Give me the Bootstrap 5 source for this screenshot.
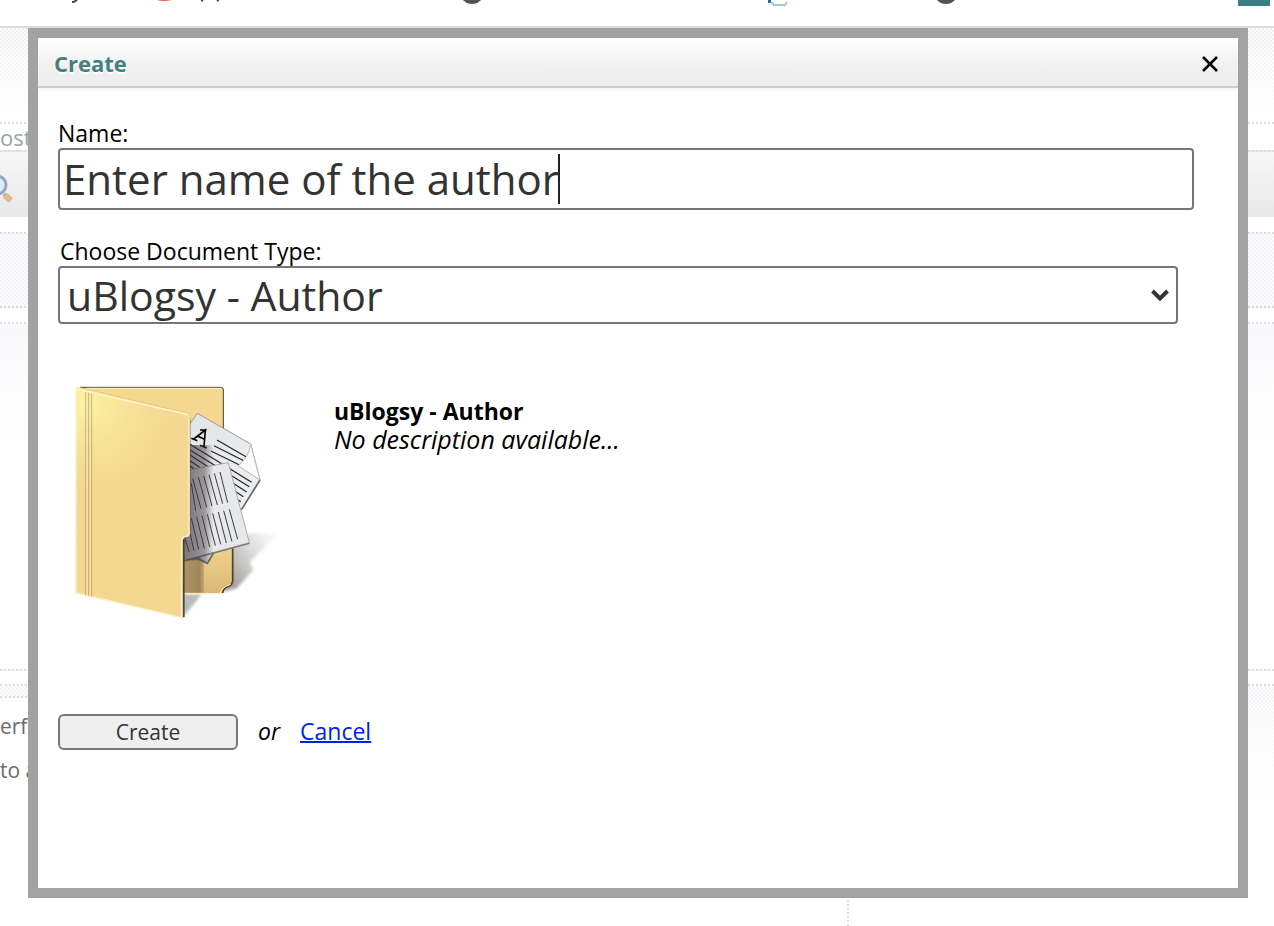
<!DOCTYPE html>
<html lang="en">
<head>
<meta charset="utf-8">
<meta name="viewport" content="width=device-width, initial-scale=1">
<title>Create</title>
<link rel="stylesheet" href="https://cdn.jsdelivr.net/npm/bootstrap@5.3.0/dist/css/bootstrap.min.css">
<style>
  body { font-family: "Open Sans", "Noto Sans", sans-serif; font-size: 23px; line-height: 28px; color: #000; background: #fff; }
  .mesh { background-image: linear-gradient(transparent, var(--veil-end, #fff)), repeating-conic-gradient(var(--ink, #f4f4f8) 0 25%, #fcfcfd 0 50%); background-size: 100% 100%, 4px 4px; }
  .rule-top { border-top: 2px dotted #dedede; }
  .rule-bottom { border-bottom: 2px dotted #dedede; }
  .topbar { height: 28px; border-bottom: 2px solid #dcdce0; }
  .hero { height: 84px; --ink: #efefef; }
  .crumbs { height: 28px; margin-top: 10px; font-size: 22px; line-height: 26px; color: #9aa3a8; }
  .tools { height: 67px; background: linear-gradient(#f7f7f7, #e8e8e8); }
  .band { height: 76px; margin-top: 15px; --veil-end: transparent; }
  .panel { height: 349px; margin-top: 14px; background: linear-gradient(#f8f8fb, #fff 120px); }
  .lower { padding-top: 13px; }
  .strip { height: 14px; --veil-end: transparent; }
  .fade-area { height: 120px; }
  .side-copy { padding-top: 6px; font-size: 21px; line-height: 44px; color: #6c6c6c; }
  .side-copy p { height: 44px; }
  .column-rule { border-right: 2px dotted #dedede; }

  .dialog { position: fixed; inset: 28px 26px 28px 28px; border: 10px solid #a2a2a2; background: #fff; overflow: auto; }
  .dialog-head { height: 50px; padding: 2px 16px 0; background: linear-gradient(#fff, #f0f0f0 60%, #eee); border-bottom: 2px solid #ccc; box-shadow: 0 2px 2px #f6f6f6; }
  .dialog-head h1 { font-size: 22px; line-height: 28px; font-weight: 700; color: #45807f; text-shadow: 0 2px 0 #fff; }
  .close-x { width: 24px; height: 24px; margin-top: 2px; }
  .dialog-body { padding: 31px 44px 20px 20px; }
  .dialog-body label { height: 29px; }
  .box-input, .box-select { border: 2px solid #767676; border-radius: 4px; color: #333; background-color: #fff; }
  .box-input { height: 62px; padding: 0 4px 2px 3px; font-size: 42px; line-height: 54px; }
  .box-select { height: 58px; padding: 0 40px 0 7px; font-size: 41px; line-height: 52px; width: calc(100% - 16px); appearance: none;
    background: #fff url("data:image/svg+xml,%3Csvg xmlns='http://www.w3.org/2000/svg' width='18' height='12' viewBox='0 0 18 12'%3E%3Cpath d='M1.5 2 9 9.5 16.5 2' fill='none' stroke='%23333' stroke-width='4'/%3E%3C/svg%3E") no-repeat right 7px center; }
  .caret { position: absolute; left: 500px; top: 6px; width: 2px; height: 50px; background: #222; }
  .type-label { margin-left: 2px; margin-top: 27px; }
  .preview { gap: 44px; margin-top: 46px; padding-left: 2px; }
  .preview-text { padding-top: 27px; }
  .preview-text em { font-size: 25px; }
  .actions { margin-top: 84px; gap: 20px; }
  .btn-make { width: 180px; height: 36px; padding: 0; border: 2px solid #767676; border-radius: 6px; background: #efefef; color: #333; font-size: 21px; line-height: 30px; }
  .link-cancel { color: #001df5; text-decoration-thickness: 2px; }
  .actions em, .link-cancel { padding-bottom: 2px; }
</style>
</head>
<body class="overflow-hidden">
<div class="vh-100 d-flex flex-column overflow-hidden" aria-hidden="true">
  <div class="topbar flex-shrink-0 d-flex">
    <svg width="440" height="10" class="flex-shrink-0"><path d="M72 2q4 0 5-3" stroke="#444" stroke-width="2" fill="none"/><ellipse cx="164" cy="-6" rx="14" ry="7" fill="#ee5b50"/><path d="M200-4q1 4 3 5M220-4q-1 4-3 5" stroke="#444" stroke-width="2" fill="none"/></svg>
    <svg width="360" height="10" class="flex-shrink-0"><circle cx="32" cy="-8" r="10" fill="none" stroke="#515156" stroke-width="4"/><path d="M328 0h3v3h-3z" fill="#2a6aa8"/><path d="M331 2l3 3h11l2-3" stroke="#a3c7dc" stroke-width="2" fill="none"/></svg>
    <svg width="200" height="10" class="flex-shrink-0"><circle cx="146" cy="-8" r="10" fill="none" stroke="#515156" stroke-width="4"/></svg>
    <svg width="32" height="6" class="ms-auto me-1 flex-shrink-0"><path d="M0 0h32v6H0z" fill="#3b8084"/></svg>
  </div>
  <div class="hero mesh flex-shrink-0"></div>
  <div class="crumbs rule-top flex-shrink-0">ost</div>
  <div class="tools rule-top flex-shrink-0">
    <svg width="28" height="60"><circle cx="-3" cy="33" r="9" fill="#d9ecfa" stroke="#9aa6b8" stroke-width="3"/><path d="M4 42l5 5" stroke="#a9adb5" stroke-width="4"/><path d="M7 41l6 5-4 5-6-5z" fill="#e3bd8c"/></svg>
  </div>
  <div class="band mesh rule-top rule-bottom flex-shrink-0"></div>
  <div class="panel rule-top rule-bottom flex-shrink-0"></div>
  <div class="lower row g-0 flex-grow-1">
    <div class="col-8 d-flex">
      <div class="flex-grow-1">
        <div class="strip mesh rule-top rule-bottom"></div>
        <div class="side-copy"><p class="m-0">erf</p><p class="m-0">to a</p></div>
      </div>
      <div class="column-rule"></div>
    </div>
    <div class="col-4"><div class="fade-area mesh rule-top"></div></div>
  </div>
</div>

<div class="dialog" role="dialog" aria-labelledby="dialog-title">
  <div class="dialog-head d-flex align-items-center justify-content-between">
    <h1 class="m-0" id="dialog-title">Create</h1>
    <button type="button" class="close-x btn p-0 border-0 d-flex align-items-center justify-content-center" aria-label="Close">
      <svg width="16" height="16" viewBox="0 0 16 16"><path d="M1 1l14 14M15 1L1 15" stroke="#000" stroke-width="2.6"/></svg>
    </button>
  </div>
  <form class="dialog-body">
    <label for="author-name" class="d-block">Name:</label>
    <div class="position-relative">
      <input id="author-name" type="text" class="box-input w-100 d-block" value="Enter name of the author">
      <span class="caret"></span>
    </div>
    <label for="doc-type" class="type-label d-block">Choose Document Type:</label>
    <select id="doc-type" class="box-select d-block"><option>uBlogsy - Author</option></select>

    <div class="preview d-flex align-items-start">
      <svg width="230" height="260" viewBox="0 0 690 780" class="flex-shrink-0" aria-hidden="true">
        <defs>
          <linearGradient id="back" x1="0" y1="0" x2="0" y2="1"><stop offset="0" stop-color="#f5d991"/><stop offset=".8" stop-color="#efd08a"/><stop offset="1" stop-color="#d9b878"/></linearGradient>
          <radialGradient id="front" gradientUnits="userSpaceOnUse" cx="80" cy="100" r="260"><stop offset="0" stop-color="#fbf3a2"/><stop offset=".5" stop-color="#f7e198"/><stop offset="1" stop-color="#f4d892"/></radialGradient>
          <linearGradient id="paper" x1="0" y1="0" x2="1" y2="1"><stop offset="0" stop-color="#e2e3e5"/><stop offset="1" stop-color="#f0f2f3"/></linearGradient>
          <linearGradient id="shade" gradientUnits="userSpaceOnUse" x1="385" y1="0" x2="460" y2="0"><stop offset="0" stop-color="#3b3438" stop-opacity=".6"/><stop offset=".65" stop-color="#3b3438" stop-opacity=".45"/><stop offset="1" stop-color="#3b3438" stop-opacity="0"/></linearGradient>
          <linearGradient id="cast" gradientUnits="userSpaceOnUse" x1="490" y1="600" x2="640" y2="500"><stop offset="0" stop-color="#8d8884" stop-opacity=".8"/><stop offset="1" stop-color="#bbb" stop-opacity=".1"/></linearGradient>
          <linearGradient id="inner" gradientUnits="userSpaceOnUse" x1="370" y1="0" x2="440" y2="0"><stop offset="0" stop-color="#b19564"/><stop offset=".7" stop-color="#a0865a"/><stop offset="1" stop-color="#a0865a" stop-opacity="0"/></linearGradient>
          <filter id="soft"><feGaussianBlur stdDeviation="5"/></filter>
          <clipPath id="sheets"><path d="M388 160L412 130 572 222 600 330 545 418 568 518 458 552 442 580 420 570 370 572V500H388z"/></clipPath>
        </defs>
        <path d="M515 510L570 490 655 492 570 575 580 600 530 655 490 665z" fill="url(#cast)" filter="url(#soft)"/>
        <path d="M368 672H425Q400 705 370 740z" fill="#777" opacity=".5" filter="url(#soft)"/>
        <path d="M48 52H484Q491 52 491 60V500L518 540V635Q518 646 506 649 492 652 487 670H370L48 600z" fill="url(#back)"/>
        <path d="M60 52H484Q490 53 490 60V190" fill="none" stroke="#4b4232" stroke-width="3"/>
        <path d="M518 535V632Q517 646 505 649 490 652 488 669" fill="none" stroke="#4b4232" stroke-width="5"/>
        <path d="M80 55H482M375 671H480Q486 651 512 643" fill="none" stroke="#fff0c2" stroke-width="3"/>
        <path d="M370 560L432 560V668H370z" fill="url(#inner)"/>
        <path d="M412 130L572 222 600 330 490 505 442 580 370 530V190z" fill="url(#paper)" stroke="#9c9c9c" stroke-width="3"/>
        <path d="M600 330L545 418M460 550L442 580 415 568" stroke="#666" stroke-width="5" fill="none"/>
        <path d="M471 210L558 260M462 227L553 273M453 243L540 286M390 223L575 337M390 240L568 350M390 255L560 366M390 272L550 380M390 288L542 395" stroke="#222" stroke-width="3.4"/>
        <path d="M572 222L600 330 534 287Q566 264 572 222z" fill="#fbfbfb" stroke="#b6b8ba" stroke-width="3"/>
        <path d="M394 205L412 212M420 226L440 234M401 207L436 180 432 230M413 199L434 208M420 180L440 180" fill="none" stroke="#000" stroke-width="5"/>
        <path d="M384 300L505 278 568 518 370 572V500H386z" fill="#e6e8ea" stroke="#aaa" stroke-width="3"/>
        <path d="M568 520L372 573" stroke="#777" stroke-width="4"/>
        <path d="M394 340L407 422M398 326L423 416M415 321L440 412M431 318L456 408M447 314L472 405M463 310L488 401M480 306L503 398M394 444L416 538M410 440L433 535M426 437L449 531M442 433L466 527M458 430L482 523M475 426L499 519M491 422L516 515M508 418L533 508M374 502L387 545M390 490L402 542" stroke="#3c3c3c" stroke-width="3"/>
        <path d="M370 225H470V575H370z" fill="url(#shade)" clip-path="url(#sheets)"/>
        <path d="M371 508V742M388 145V488" stroke="#4b4334" stroke-width="6"/>
        <path d="M48 54Q50 51 60 53L378 128Q389 131 389 145V490Q389 500 378 500 367 502 367 512V745L46 670z" fill="url(#front)"/>
        <path d="M364 743L48 669V57L378 132Q387 135 387 147V490Q387 498 378 499 366 501 365 512V742" fill="none" stroke="#fff3cb" stroke-width="4"/>
        <path d="M60 53L378 128Q388 131 389 145" fill="none" stroke="#d6c66d" stroke-width="2"/>
        <path d="M77 66V676M86 68V678M95 70V680" stroke="#b2965b" stroke-opacity=".8" stroke-width="2.5"/>
        <path d="M81 67V676M91 69V678" stroke="#fbe6ad" stroke-width="3"/>
      </svg>
      <div class="preview-text"><strong class="d-block">uBlogsy - Author</strong><em class="d-block">No description available...</em></div>
    </div>

    <div class="actions d-flex align-items-center">
      <button type="button" class="btn-make">Create</button>
      <em>or</em>
      <a href="#" class="link-cancel">Cancel</a>
    </div>
  </form>
</div>
<script src="https://cdn.jsdelivr.net/npm/bootstrap@5.3.0/dist/js/bootstrap.bundle.min.js"></script>
</body>
</html>
